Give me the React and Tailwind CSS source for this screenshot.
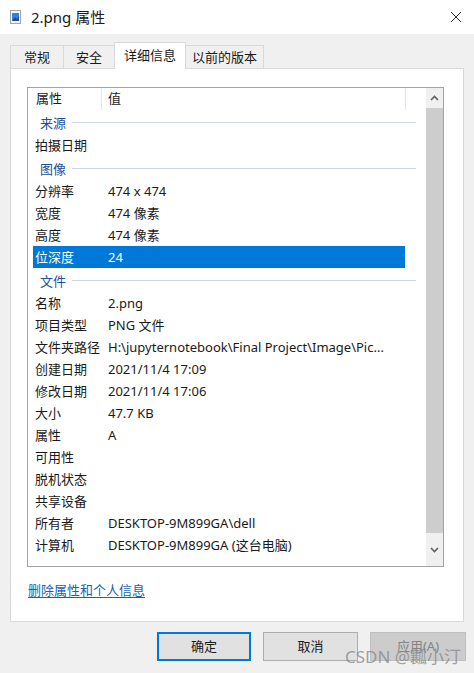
import React from "react";

const groups = [
    { title: "来源", rows: [["拍摄日期", ""]] },
    {
        title: "图像",
        rows: [
            ["分辨率", "474 x 474"],
            ["宽度", "474 像素"],
            ["高度", "474 像素"],
            ["位深度", "24", true],
        ],
    },
    {
        title: "文件",
        rows: [
            ["名称", "2.png"],
            ["项目类型", "PNG 文件"],
            ["文件夹路径", "H:\\jupyternotebook\\Final Project\\Image\\Pic..."],
            ["创建日期", "2021/11/4 17:09"],
            ["修改日期", "2021/11/4 17:06"],
            ["大小", "47.7 KB"],
            ["属性", "A"],
            ["可用性", ""],
            ["脱机状态", ""],
            ["共享设备", ""],
            ["所有者", "DESKTOP-9M899GA\\dell"],
            ["计算机", "DESKTOP-9M899GA (这台电脑)"],
        ],
    },
];

const tabs = [
    ["常规", "w-[54px]"],
    ["安全", "w-[52px]"],
    ["详细信息", "w-[72px]"],
    ["以前的版本", "w-[79px]"],
];

const FileIcon = () => (
    <svg width="11" height="14" viewBox="0 0 11 14">
        <rect x="0.5" y="0.5" width="10" height="13" fill="#f4f7fb" stroke="#9aa7b8" />
        <rect x="2" y="3" width="7" height="8" fill="#3d7fd6" />
        <path d="M2 11 L5 7 L7 9 L9 6 L9 11 Z" fill="#1d4f9c" />
    </svg>
);

const Chevron = ({ up }) => (
    <svg width="9" height="6" viewBox="0 0 9 6">
        <path
            d={up ? "M1 5 L4.5 1.5 L8 5" : "M1 1 L4.5 4.5 L8 1"}
            fill="none"
            stroke="#606060"
            strokeWidth="1.6"
        />
    </svg>
);

const Row = ({ label, value, selected }) => (
    <div
        className={`h-[22px] ml-[5px] w-[372px] flex items-center leading-[22px] ${
            selected ? "bg-[#0078d7] text-white" : "text-[#1a1a1a]"
        }`}
    >
        <div className="w-[75px] pl-[2px] shrink-0 whitespace-nowrap">{label}</div>
        <div className="whitespace-nowrap">{value}</div>
    </div>
);

const GroupTitle = ({ title }) => (
    <div className="h-[24px] flex items-center pl-[12px] pr-[10px] pt-[1px]">
        <span className="text-[#1e4f9c] leading-[22px]">{title}</span>
        <div className="flex-1 h-px bg-[#cfd7e3] ml-[6px]" />
    </div>
);

export default function App() {
    return (
        <div className="w-[474px] h-[673px] bg-[#f0f0f0] relative overflow-hidden font-['Noto_Sans','Noto_Sans_CJK_SC',sans-serif] text-[13px] leading-normal">
            {/* title bar */}
            <div className="h-[34px] bg-white flex items-center pl-[10px] pr-[12px]">
                <FileIcon />
                <div className="ml-[10px] text-[15px] text-[#1a1a1a]">2.png 属性</div>
                <div className="flex-1" />
                <svg width="12" height="12" viewBox="0 0 12 12">
                    <path d="M1 1 L11 11 M11 1 L1 11" stroke="#333" strokeWidth="1" />
                </svg>
            </div>

            {/* tabs */}
            <div className="h-[34px] pl-[10px] flex items-end">
                {tabs.map(([t, w]) =>
                    t === "详细信息" ? (
                        <div
                            key={t}
                            className={`${w} h-[27px] -mb-px -ml-px bg-white border border-b-0 border-[#d9d9d9] flex items-center justify-center relative z-10 text-[#1a1a1a]`}
                        >
                            {t}
                        </div>
                    ) : (
                        <div
                            key={t}
                            className={`${w} h-[23px] border border-b-0 border-[#d9d9d9] -ml-px first:ml-0 flex items-center justify-center pt-[2px] text-[#1a1a1a]`}
                        >
                            {t}
                        </div>
                    )
                )}
            </div>

            {/* page */}
            <div className="ml-[10px] w-[454px] h-[554px] bg-white border border-[#d9d9d9] pt-[18px] pl-[16px]">
                <div className="w-[417px] h-[480px] border border-[#a3a3a3] flex">
                    <div className="flex-1 flex flex-col">
                        <div className="h-[22px] flex items-center text-[#1a1a1a]">
                            <div className="w-[74px] h-full pl-[8px] flex items-center border-r border-[#e5e5e5]">属性</div>
                            <div className="w-[304px] h-full pl-[6px] flex items-center border-r border-[#e5e5e5]">值</div>
                        </div>
                        {groups.map((g) => (
                            <div key={g.title}>
                                <GroupTitle title={g.title} />
                                {g.rows.map(([l, v, s]) => (
                                    <Row key={l + v} label={l} value={v} selected={s} />
                                ))}
                            </div>
                        ))}
                    </div>
                    <div className="w-[17px] bg-[#f0f0f0] flex flex-col">
                        <div className="h-[20px] flex items-center justify-center">
                            <Chevron up />
                        </div>
                        <div className="h-[425px] bg-[#cdcdcd]" />
                        <div className="flex-1 flex items-center justify-center">
                            <Chevron />
                        </div>
                    </div>
                </div>
                <div className="mt-[14px] ml-[1px]">
                    <span className="text-[#1a5fb4] underline underline-offset-2">删除属性和个人信息</span>
                </div>
            </div>

            {/* buttons */}
            <div className="mt-[10px] pl-[157px] flex gap-[12px]">
                <div className="w-[94px] h-[29px] bg-[#e1e1e1] border-2 border-[#0078d7] flex items-center justify-center text-[#1a1a1a]">
                    确定
                </div>
                <div className="w-[95px] h-[29px] bg-[#e1e1e1] border border-[#adadad] flex items-center justify-center text-[#1a1a1a]">
                    取消
                </div>
                <div className="w-[96px] h-[29px] bg-[#cccccc] border border-[#bfbfbf] flex items-center justify-center text-[#838383]">
                    应用(A)
                </div>
            </div>

            {/* watermark */}
            <div className="absolute left-[345px] top-[644px] text-[17px] text-[#8a8a8a]/80 whitespace-nowrap">
                CSDN @瓤小汀
            </div>
        </div>
    );
}
